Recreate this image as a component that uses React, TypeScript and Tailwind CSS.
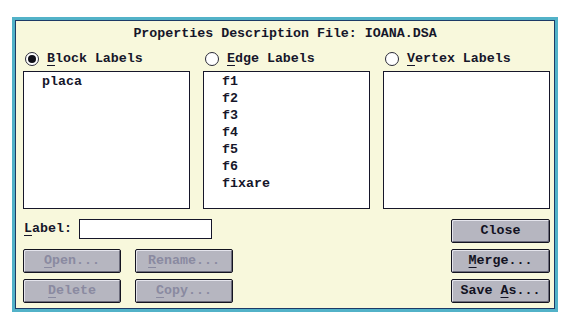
import React, { useState } from 'react';

type Kind = 'block' | 'edge' | 'vertex';

const mono = "font-['Liberation_Mono','DejaVu_Sans_Mono',monospace] font-bold text-[13.3px]";

// mnemonic letter, underlined like the old dialog
const Key: React.FC<{ children: React.ReactNode }> = ({ children }) => (
  <span className="underline decoration-1 underline-offset-[3px]">{children}</span>
);

const Radio: React.FC<{ checked: boolean; onClick: () => void; children: React.ReactNode }> = ({ checked, onClick, children }) => (
  <button onClick={onClick} className="w-[167px] h-[16px] flex items-center">
    <span className="ml-[2px] w-[14px] h-[14px] rounded-full border border-[#2a2a38] bg-white flex items-center justify-center shrink-0">
      {checked && <span className="w-[8px] h-[8px] rounded-full bg-[#101018]" />}
    </span>
    <span className="ml-[8px] leading-[16px] text-[#16162a]">{children}</span>
  </button>
);

const ListBox: React.FC<{ items: string[] }> = ({ items }) => (
  <div className="w-[167px] h-[138px] border border-[#16162a] bg-white pt-[1px] pl-[18px]">
    {items.map(item => (
      <div key={item} className="leading-[17px] text-[#16162a]">{item}</div>
    ))}
  </div>
);

const Btn: React.FC<{ disabled?: boolean; wide?: boolean; children: React.ReactNode }> = ({ disabled, wide, children }) => (
  <button
    disabled={disabled}
    className={`${wide ? 'w-[99px]' : 'w-[98px]'} h-[24px] rounded-[2px] border border-[#141420] bg-[#b6b6c0] shadow-[inset_1px_1px_0_#e4e4ec,inset_-1px_-1px_0_#6c6c7c] flex items-center justify-center leading-[16px] ${disabled ? 'text-[#8a8aa0]' : 'text-[#121222]'}`}
  >
    <span className="whitespace-pre">{children}</span>
  </button>
);

export default function App() {
  const [kind, setKind] = useState<Kind>('block');
  const [label, setLabel] = useState('');

  return (
    <div className={`w-[566px] h-[321px] bg-white pt-[17px] pl-[12px] ${mono}`}>
      <div className="w-[546px] h-[295px] border-[3px] border-[#52b2c8]">
        <div className="h-full border border-[#1d3a66] bg-[#f8f8dc] flex flex-col">
          <div className="mt-[5px] leading-[16px] text-center text-[#16162a]">
            Properties Description File: IOANA.DSA
          </div>

          <div className="pl-[7px]">
            {/* radio selectors */}
            <div className="mt-[9px] flex gap-[13px]">
              <Radio checked={kind === 'block'} onClick={() => setKind('block')}>
                <Key>B</Key>lock Labels
              </Radio>
              <Radio checked={kind === 'edge'} onClick={() => setKind('edge')}>
                <Key>E</Key>dge Labels
              </Radio>
              <Radio checked={kind === 'vertex'} onClick={() => setKind('vertex')}>
                <Key>V</Key>ertex Labels
              </Radio>
            </div>

            {/* label lists */}
            <div className="mt-[4px] flex gap-[13px]">
              <ListBox items={['placa']} />
              <ListBox items={['f1', 'f2', 'f3', 'f4', 'f5', 'f6', 'fixare']} />
              <ListBox items={[]} />
            </div>

            {/* bottom controls */}
            <div className="mt-[10px] w-[527px] flex justify-between">
              <div className="flex flex-col">
                <div className="h-[20px] flex items-center">
                  <span className="w-[56px] pl-[1px] text-[#16162a]">
                    <Key>L</Key>abel:
                  </span>
                  <input
                    value={label}
                    onChange={e => setLabel(e.target.value)}
                    className="w-[133px] h-[20px] border border-[#16162a] bg-white outline-none px-1"
                  />
                </div>
                <div className="mt-[10px] flex gap-[14px]">
                  <Btn disabled><Key>O</Key>pen...</Btn>
                  <Btn disabled><Key>R</Key>ename...</Btn>
                </div>
                <div className="mt-[6px] flex gap-[14px]">
                  <Btn disabled><Key>D</Key>elete</Btn>
                  <Btn disabled><Key>C</Key>opy...</Btn>
                </div>
              </div>

              <div className="flex flex-col gap-[6px]">
                <Btn wide>Close</Btn>
                <Btn wide><Key>M</Key>erge...</Btn>
                <Btn wide>Save <Key>A</Key>s...</Btn>
              </div>
            </div>
          </div>
        </div>
      </div>
    </div>
  );
}
